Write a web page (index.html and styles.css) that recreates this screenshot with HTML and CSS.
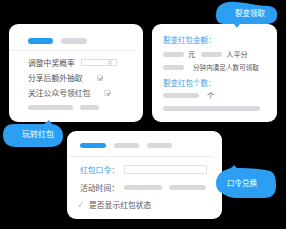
FILE: index.html
```html
<!DOCTYPE html>
<html lang="zh-CN">
<head>
<meta charset="utf-8">
<link rel="stylesheet" href="styles.css">
</head>
<body>
<div class="canvas">

  <div class="card card-a">
    <div class="tabs">
      <span class="pill blue w25"></span>
      <span class="pill gray w26"></span>
    </div>
    <div class="divider divider-a"></div>
    <div class="rows">
      <div class="row"><span>调整中奖概率</span>
        <span class="select"><svg width="4" height="5" viewBox="0 0 4 5"><path d="M0.5 2 L2 0.6 L3.5 2 M0.5 3 L2 4.4 L3.5 3" fill="none" stroke="#999" stroke-width="0.7"/></svg></span>
      </div>
      <div class="row"><span>分享后额外抽取</span><span class="check"></span></div>
      <div class="row"><span>关注公众号领红包</span><span class="check"></span></div>
    </div>
    <div class="pill-row">
      <span class="pill gray w45"></span>
      <span class="pill gray w19"></span>
    </div>
  </div>

  <div class="card card-b">
    <div class="title t1">裂变红包金额：</div>
    <div class="line l1"><span class="pill gray w21"></span><span class="txt g4">元</span><span class="pill gray w21 g6"></span><span class="txt g4">人平分</span></div>
    <div class="line l2"><span class="pill gray w21"></span><span class="txt small g9">分钟内凑足人数可领取</span></div>
    <div class="title t2">裂变红包个数：</div>
    <div class="line l3"><span class="pill gray w36"></span><span class="txt g8">个</span></div>
    <span class="pill gray w97 long"></span>
  </div>

  <div class="card card-c">
    <div class="tabs tabs-c">
      <span class="pill blue w26"></span>
      <span class="pill gray w25"></span>
      <span class="pill gray w25"></span>
    </div>
    <div class="divider divider-c"></div>
    <div class="crow r1"><span class="lbl blue-t">红包口令：</span><span class="input"></span></div>
    <div class="crow r2"><span class="lbl">活动时间：</span><span class="pill gray w38"></span><span class="pill gray w37 g7"></span></div>
    <div class="crow r3"><span class="tick">✓</span><span class="lbl">是否显示红包状态</span></div>
  </div>

  <div class="bubble bubble-a">
    <svg width="66" height="30" viewBox="0 0 66 30"><path d="M2 15 C2 5 10 1 22 2 C36 3 44 6 54 6 C61 6 64 11 63 17 C62 22 58 24 51 24 L26 24 L23 28 L20 24 L10 24 C4 24 2 20 2 15 Z" fill="#2d9ff3"/></svg>
    <span class="btxt">裂变领取</span>
  </div>

  <div class="bubble bubble-b">
    <svg width="66" height="32" viewBox="0 0 66 32"><path d="M3 17 C3 9 8 6 14 6 L44 6 L49 2 L52 6 C59 7 63 11 63 18 C63 25 58 29 50 29 L16 29 C8 29 3 25 3 17 Z" fill="#2d9ff3"/></svg>
    <span class="btxt">玩转红包</span>
  </div>

  <div class="bubble bubble-c">
    <svg width="66" height="38" viewBox="0 0 66 38"><path d="M4 21 C4 15 8 9 16 7 L19 6 L22 3 L25 6 C40 6 50 7 58 9 C63 11 64 16 64 24 C64 32 60 36 52 36 L24 36 C16 36 12 32 8 30 C5 28 4 25 4 21 Z" fill="#2d9ff3"/></svg>
    <span class="btxt">口令兑换</span>
  </div>

</div>
</body>
</html>
```
FILE: styles.css
```css
* { box-sizing: border-box; }
html, body { margin: 0; padding: 0; }
body {
  background: #000;
  width: 286px;
  height: 229px;
  overflow: hidden;
  font-family: "Noto Sans CJK SC", "Noto Sans", sans-serif;
  color: #555;
}
.canvas { position: relative; width: 286px; height: 229px; }

.card {
  position: absolute;
  background: #fff;
  border-radius: 9px;
  display: flex;
  flex-direction: column;
}
.card-a { left: 9px; top: 24px; width: 134px; height: 98px; }
.card-b { left: 152px; top: 24px; width: 125px; height: 98px; padding-left: 11px; }
.card-c { left: 67px; top: 131px; width: 155px; height: 88px; }

.pill { display: inline-block; height: 5px; border-radius: 3px; flex: none; }
.pill.blue { background: #239cf2; }
.pill.gray { background: #d9d9dd; }
.w19 { width: 19px; } .w21 { width: 21px; } .w25 { width: 25px; } .w26 { width: 26px; }
.w36 { width: 36px; } .w37 { width: 37px; } .w38 { width: 38px; } .w45 { width: 45px; } .w97 { width: 97px; }

.tabs { display: flex; gap: 8px; padding: 14px 0 0 19px; }
.tabs .pill { height: 6px; }
.divider { height: 1px; background: #ececec; }
.divider-a { margin: 6px 5px 0 1px; }

.rows { display: flex; flex-direction: column; padding: 4px 0 0 19px; }
.row { display: flex; align-items: center; height: 15px; font-size: 7.8px; line-height: 15px; }
.select {
  margin-left: 6px; width: 36px; height: 7px; border: 1px solid #ddd;
  display: flex; align-items: center; justify-content: flex-end; padding-right: 4px;
}
.select svg { display: block; }
.check {
  margin-left: 14px; width: 6px; height: 6px; border: 0.6px solid #ddd; position: relative;
}
.check::after {
  content: ""; position: absolute; left: 1.4px; top: 0.3px; width: 2px; height: 3.4px;
  border: solid #999; border-width: 0 0.8px 0.8px 0; transform: rotate(40deg);
}
.pill-row { display: flex; gap: 7px; padding: 5px 0 0 19px; }

.title { color: #3b9ff0; font-size: 7.5px; line-height: 12px; height: 12px; }
.t1 { margin-top: 10px; }
.t2 { margin-top: 4px; }
.line { display: flex; align-items: center; height: 12px; font-size: 7.2px; line-height: 12px; }
.l1 { margin-top: 2px; }
.l2 { margin-top: 1px; }
.txt.small { font-size: 6.6px; }
.g4 { margin-left: 4px; } .g6 { margin-left: 6px; } .g7 { margin-left: 7px; } .g8 { margin-left: 8px; } .g9 { margin-left: 9px; }
.long { margin-top: 5px; height: 5px; }

.tabs-c { padding: 12px 0 0 13px; }
.tabs-c .pill { height: 5px; }
.divider-c { margin: 8px 9px 0 1px; }
.crow { display: flex; align-items: center; height: 13px; padding-left: 13px; font-size: 7.8px; line-height: 13px; }
.r1 { margin-top: 6px; }
.r2 { margin-top: 5px; }
.r3 { margin-top: 4px; }
.blue-t { color: #3b9ff0; }
.lbl { width: 44px; flex: none; white-space: nowrap; }
.r3 .lbl { width: auto; }
.input { width: 83px; height: 9px; border: 1px solid #e2e2e2; }
.tick { color: #aaa; font-size: 7px; width: 11px; margin-left: -2px; }

.bubble { position: absolute; }
.bubble svg { display: block; }
.btxt {
  position: absolute; color: #fff; font-size: 7.5px; line-height: 10px; white-space: nowrap;
}
.bubble-a { left: 214px; top: 0; }
.bubble-a .btxt { left: 21px; top: 8px; }
.bubble-b { left: 0; top: 118px; }
.bubble-b .btxt { left: 22px; top: 11px; font-size: 8px; }
.bubble-c { left: 212px; top: 162px; }
.bubble-c .btxt { left: 15px; top: 16px; }
```
